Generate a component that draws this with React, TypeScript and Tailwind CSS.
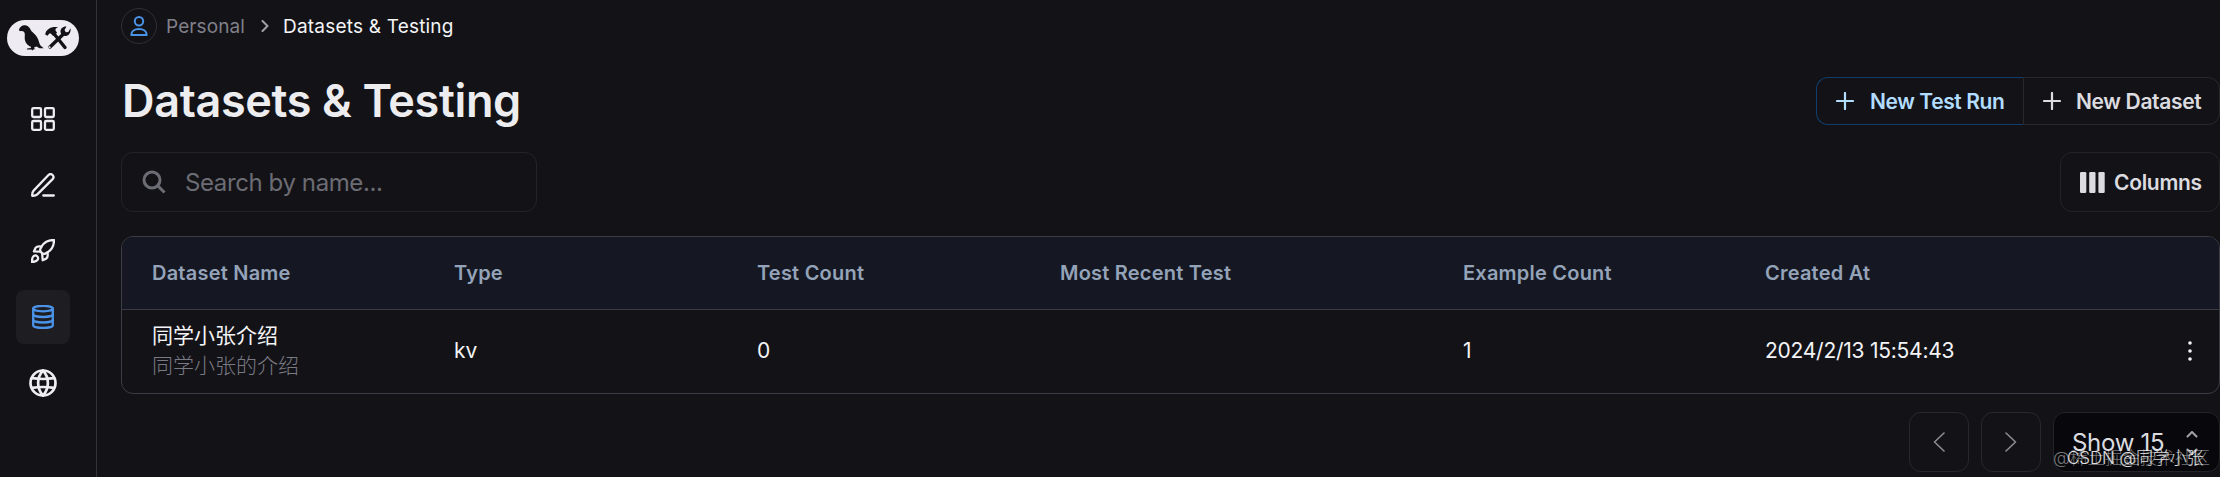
import { ReactNode } from 'react';
import clsx from 'clsx';

const columns = ['Dataset Name', 'Type', 'Test Count', 'Most Recent Test', 'Example Count', 'Created At'];

const datasets = [
  {
    name: '同学小张介绍',
    description: '同学小张的介绍',
    type: 'kv',
    testCount: 0,
    recentTest: '',
    exampleCount: 1,
    createdAt: '2024/2/13 15:54:43',
  },
];

const rowGrid = 'grid grid-cols-[302px_303px_303px_403px_302px_1fr] pl-[30px]';

function Icon({ children, className, box = '0 0 24 24', width = 2.3 }: { children: ReactNode; className: string; box?: string; width?: number }) {
  return (
    <svg viewBox={box} className={className} fill="none" stroke="currentColor" strokeWidth={width} strokeLinecap="round" strokeLinejoin="round">
      {children}
    </svg>
  );
}

function Logo() {
  return (
    <div className="ml-[7px] mt-5 flex h-9 w-[72px] items-center rounded-full bg-[#eeebf2] text-[#121217]">
      <svg viewBox="0 0 72 36" className="h-9 w-[72px]" fill="none">
        {/* parrot */}
        <path
          fill="currentColor"
          d="M12 9.500C13 6.500 15.500 4.800 18.500 5.300c3 .5 4.500 2.800 5.500 5.200 2 2.500 5.500 4.500 7.200 9 .9 2.500 1.300 4.500 2.300 6l3.200 2.800-4.200-.1-3-1.600-2.500.8.300 1.100 1.200.6-2.200.3-.8 1.100-1.100-1.100-4.600.100.300-1 3.700-.4.200-1.400c-4-1.500-6.200-4.800-6.300-8.800 0-2.500.6-4.200-.7-6.200-1.300-.9-3-.9-4-.4-.6-.4-1-1-1-1.800z"
        />
        {/* crossed hammer and wrench */}
        <path d="m46 12.500 12 15" stroke="currentColor" strokeWidth="3.400" strokeLinecap="round" />
        <path fill="currentColor" d="M38.200 14.500c.2-2.700 1.700-4.700 4.100-6.100 2.500-1.500 5.300-1.900 9-1.100-2.300.6-3.200 1.700-2.800 3.200l1.600 2.200-4 3.300-2.300-2.500-1.500-.1-1.800 2.300z" />
        <path d="M57 13.500 43 27" stroke="currentColor" strokeWidth="3.400" strokeLinecap="round" />
        <path fill="currentColor" d="M59.500 6.600 57.500 10l1.300 2.200 2.500-.3 2.200-3.700c.7 4-1.600 7.400-4.600 7.700-2.800.3-5.300-1.700-5.400-4.200-.2-3 2.700-5.500 6-5.100z" />
        <circle cx="42.600" cy="27.300" r="1" fill="#eeebf2" />
      </svg>
    </div>
  );
}

function NavItem({ active, children }: { active?: boolean; children: ReactNode }) {
  return (
    <a className={clsx('flex size-[54px] items-center justify-center rounded-lg', active ? 'bg-[#1e1e22] text-[#4a93e8]' : 'text-[#eeeef2]')}>
      {children}
    </a>
  );
}

function Sidebar() {
  return (
    <aside className="flex w-[97px] shrink-0 flex-col border-r border-[#33343b]">
      <Logo />
      <nav className="ml-4 mt-9 flex flex-col gap-3">
        <NavItem>
          <Icon className="size-6">
            <rect x="1.200" y="1.200" width="8.800" height="8.800" rx="1.200" />
            <rect x="14" y="1.200" width="8.800" height="8.800" rx="1.200" />
            <rect x="1.200" y="14" width="8.800" height="8.800" rx="1.200" />
            <rect x="14" y="14" width="8.800" height="8.800" rx="1.200" />
          </Icon>
        </NavItem>
        <NavItem>
          <Icon className="size-6">
            <path d="M12.300 22.500h10.500" />
            <path d="M17.500 2a2.900 2.900 0 0 1 4.100 4.100L6.300 21.400c-1.300 1.300-2.900 1.500-5.100 1.400-.1-2.200.1-3.900 1.400-5.200z" />
          </Icon>
        </NavItem>
        <NavItem>
          <Icon className="size-6">
            <path d="M23 1c-6.500 0-10 2.600-12.200 6L9.200 10.200c-.5 2.300 2.300 5.200 4.700 4.600l3.100-1.700C20.600 10.700 23 7.300 23 1z" />
            <path d="M10.500 7.600C7.800 7 5.700 7.300 4.500 8.900L2.900 12.400l6 .2M16.400 13.600c.7 2.700.3 4.800-1.200 6l-3.500 1.700-.5-6" />
            <path d="M1 23c-.1-3 .3-5 1.800-6.100 2.500-1.500 5.200 1.200 3.900 3.700C5.700 22.300 4 23 1 23z" />
          </Icon>
        </NavItem>
        <NavItem active>
          <Icon className="size-6">
            <ellipse cx="12" cy="3.600" rx="9.800" ry="2.700" />
            <path d="M2.200 3.600v16.600C2.200 21.800 6.500 23 12 23s9.800-1.200 9.800-2.800V3.600" />
            <path d="M2.200 9.200c0 1.600 4.300 2.800 9.800 2.800s9.800-1.200 9.800-2.800M2.200 14.700c0 1.600 4.300 2.800 9.800 2.800s9.800-1.200 9.800-2.800" />
          </Icon>
        </NavItem>
        <NavItem>
          <Icon className="size-7" box="0 0 28 28" width={2.7}>
            <circle cx="14" cy="14" r="12.500" />
            <path d="M14 1.500C7.500 8.500 7.500 19.500 14 26.500M14 1.500c6.500 7 6.500 18 0 25" />
            <path d="M3 9.200c7 1 15 1 22 0M3 18.800c7-1 15-1 22 0" />
          </Icon>
        </NavItem>
      </nav>
    </aside>
  );
}

function PlusIcon() {
  return (
    <Icon className="size-[18px]" box="0 0 18 18" width={2.2}>
      <path d="M9 1v16M1 9h16" />
    </Icon>
  );
}

function PageButton({ d }: { d: string }) {
  return (
    <button className="flex size-[60px] items-center justify-center rounded-xl border border-[#28282d] text-[#8b8b90]">
      <Icon className="h-5 w-3" box="0 0 12 20" width={1.6}>
        <path d={d} />
      </Icon>
    </button>
  );
}

function DatasetTable() {
  return (
    <section className="mt-6 h-[158px] rounded-xl border border-[#3a3d45] overflow-hidden">
      <div className={clsx(rowGrid, 'h-[73px] items-center border-b border-[#3a3d45] bg-[#151823] text-[20px] font-semibold tracking-[0.22px] text-[#94a3b8]')}>
        {columns.map((column) => (
          <div key={column}>{column}</div>
        ))}
      </div>
      {datasets.map((dataset) => (
        <div key={dataset.name} className={clsx(rowGrid, 'h-[82px] items-center text-[21px] text-[#f4f4f6]')}>
          <div className="-mt-px leading-[30px]">
            <div>{dataset.name}</div>
            <div className="font-light text-[#7a7a84]">{dataset.description}</div>
          </div>
          <div>{dataset.type}</div>
          <div>{dataset.testCount}</div>
          <div>{dataset.recentTest}</div>
          <div>{dataset.exampleCount}</div>
          <div className="flex items-center justify-between pr-[27px]">
            <span className="tracking-[-0.25px]">{dataset.createdAt}</span>
            <svg viewBox="0 0 4 20" className="h-5 w-1" fill="currentColor">
              <circle cx="2" cy="2" r="1.800" />
              <circle cx="2" cy="10" r="1.800" />
              <circle cx="2" cy="18" r="1.800" />
            </svg>
          </div>
        </div>
      ))}
    </section>
  );
}

export default function App() {
  return (
    <div className="flex h-[477px] w-[2220px] overflow-hidden bg-[#131317] font-['Inter','Noto_Sans_CJK_SC',sans-serif] text-[#f4f4f6]">
      <Sidebar />
      <main className="ml-6 flex min-w-0 flex-1 flex-col">
        <div className="mt-2 flex h-9 items-center text-[19px]">
          <span className="flex size-9 items-center justify-center rounded-full border border-[#303138] text-[#4a93e8]">
            <Icon className="h-5 w-[18px]" box="0 0 18 20" width={2}>
              <circle cx="9" cy="5.200" r="4.200" />
              <path d="M1.300 19c0-4 3.400-6 7.700-6s7.700 2 7.700 6z" />
            </Icon>
          </span>
          <span className="ml-[9px] w-[79px] pt-0.5 tracking-[0.1px] text-[#80808a]">Personal</span>
          <Icon className="ml-4 h-3 w-2 text-[#a0a0a6]" box="0 0 8 12" width={2}>
            <path d="m1.500 1 5 5-5 5" />
          </Icon>
          <span className="ml-[14px] pt-0.5 whitespace-nowrap tracking-[0.2px]">Datasets &amp; Testing</span>
        </div>

        <header className="mt-[33px] flex h-12 items-center justify-between">
          <h1 className="ml-px whitespace-nowrap text-[45px] font-semibold tracking-[-0.35px] text-[#ededf0]">Datasets &amp; Testing</h1>
          <div className="flex h-12 text-[21px] font-semibold">
            <button className="flex w-[207px] items-center gap-4 rounded-l-xl border border-r-0 border-[#123c6b] pl-[19px] text-[#b2ddff]">
              <PlusIcon />
              <span className="pt-0.5 whitespace-nowrap tracking-[-0.4px]">New Test Run</span>
            </button>
            <button className="flex w-[197px] items-center gap-4 rounded-r-xl border border-[#28282d] pl-[19px] text-[#dcdce0]">
              <PlusIcon />
              <span className="-ml-px pt-0.5 whitespace-nowrap tracking-[-0.35px]">New Dataset</span>
            </button>
          </div>
        </header>

        <div className="mt-[27px] flex h-[60px] justify-between">
          <div className="flex w-[416px] items-center rounded-xl border border-[#232328] pl-5 text-2xl text-[#6c6c74]">
            <Icon className="size-6" width={3}>
              <circle cx="10" cy="10" r="8" />
              <path d="m16 16 6.500 6.500" strokeLinecap="butt" />
            </Icon>
            <span className="ml-[19px] pt-0.5 tracking-[-0.4px]">Search by name...</span>
          </div>
          <button className="flex w-[160px] items-center rounded-xl border border-[#232328] pl-[19px] text-[21px] font-semibold text-[#dcdce0]">
            <svg viewBox="0 0 25 21" className="h-[21px] w-[25px]" fill="currentColor">
              <rect width="6.300" height="21" rx="1.200" />
              <rect x="9.200" width="6.300" height="21" rx="1.200" />
              <rect x="18.400" width="6.300" height="21" rx="1.200" />
            </svg>
            <span className="ml-[9px] pt-0.5 tracking-[-0.3px]">Columns</span>
          </button>
        </div>

        <DatasetTable />

        <footer className="mt-[18px] flex h-[60px] justify-end gap-3">
          <PageButton d="M11 1 1.500 10 11 19" />
          <PageButton d="m1 1 9.500 9L1 19" />
          <div className="relative flex w-[167px] items-center rounded-xl border border-[#232328] bg-[#08080c] pl-[18px] text-2xl">
            <span className="pt-0.5 tracking-[-0.3px] text-[#dcdce0]">Show 15</span>
            <Icon className="absolute left-[132px] top-[18px] h-6 w-3 text-[#a0a0a6]" box="0 0 12 24" width={2}>
              <path d="m1.500 5.500 4.500-4.500 4.500 4.500M1.500 18.500l4.500 4.500 4.500-4.500" />
            </Icon>
            <span className="absolute left-[-1px] top-[33px] whitespace-nowrap text-[17.500px] leading-6 font-light text-white/45">@稀土掘金技术社区</span>
            <span className="absolute left-[13px] top-[33px] whitespace-nowrap text-[17px] leading-6 font-light tracking-[-0.1px] text-white/85">CSDN @同学小张</span>
          </div>
        </footer>
      </main>
    </div>
  );
}
